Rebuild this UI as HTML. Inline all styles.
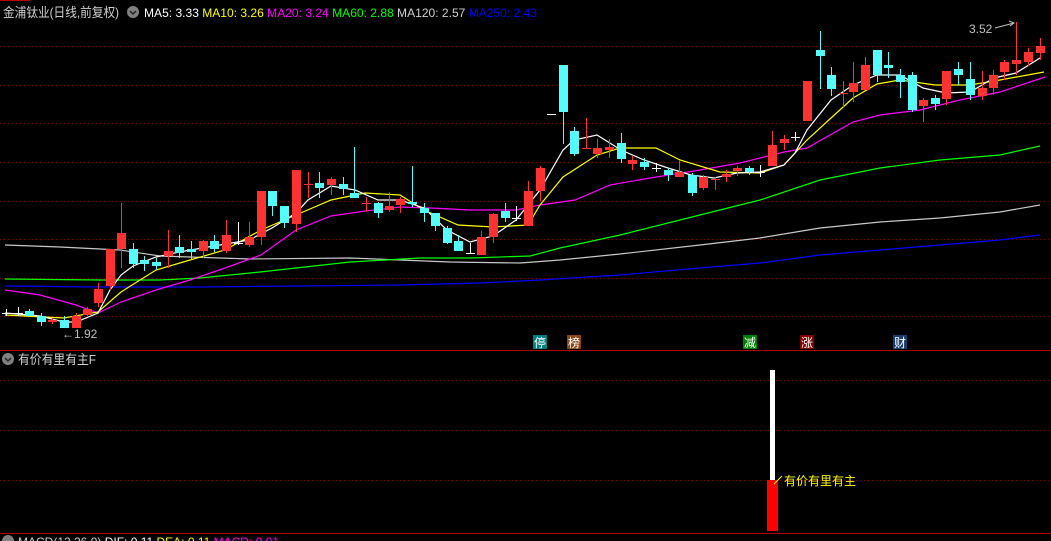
<!DOCTYPE html>
<html><head><meta charset="utf-8"><style>
html,body{margin:0;padding:0;background:#000;width:1051px;height:541px;overflow:hidden}
svg{display:block}
text{font-family:"Liberation Sans","Noto Sans CJK SC",sans-serif}
</style></head><body>
<svg width="1051" height="541" viewBox="0 0 1051 541" xmlns="http://www.w3.org/2000/svg">
<rect width="1051" height="541" fill="#000"/>
<line x1="0" y1="0.5" x2="30" y2="0.5" stroke="#b00" />
<g stroke="#7a0000" stroke-dasharray="1,3" stroke-width="1">
<line x1="0" y1="46.5" x2="1051" y2="46.5"/><line x1="0" y1="85.5" x2="1051" y2="85.5"/>
<line x1="0" y1="123.5" x2="1051" y2="123.5"/><line x1="0" y1="162.5" x2="1051" y2="162.5"/>
<line x1="0" y1="201.5" x2="1051" y2="201.5"/><line x1="0" y1="239.5" x2="1051" y2="239.5"/>
<line x1="0" y1="278.5" x2="1051" y2="278.5"/><line x1="0" y1="316.5" x2="1051" y2="316.5"/>
<line x1="0" y1="380.5" x2="1051" y2="380.5"/><line x1="0" y1="430.5" x2="1051" y2="430.5"/>
<line x1="0" y1="480.5" x2="1051" y2="480.5"/>
</g>
<line x1="0" y1="350.5" x2="1051" y2="350.5" stroke="#b00000"/>
<line x1="0" y1="533.5" x2="1051" y2="533.5" stroke="#b00000"/>
<g fill="none" stroke-width="1.2">
<polyline stroke="#c8c8c8" points="5,245 60,247 120,250 160,256 250,259 350,258 450,262 520,263 560,260 620,254 700,245 760,238 820,228 880,222 940,218 1000,212 1040,205"/>
<polyline stroke="#0000ff" points="5,286 100,287 200,287 300,286 400,285 480,283 540,280 620,275 700,268 760,263 820,255 880,250 940,245 1000,240 1040,235"/>
<polyline stroke="#00ff00" points="5,279 100,280 160,280 200,278 260,272 350,262 420,258 470,258 530,256 560,248 620,235 700,215 760,200 820,180 880,168 940,160 1000,155 1040,146"/>
<polyline stroke="#ff00ff" points="5,290 40,295 76,305 98,313 121,302 156,290 190,280 225,268 261,255 296,230 331,216 365,211 400,207 430,208 470,210 516,210 540,205 575,200 610,185 650,178 700,170 740,163 784,152 807,148 853,122 880,115 920,110 960,100 1000,92 1045,77"/>
<polyline stroke="#ffff00" points="5,315 64,318 98,312 121,292 156,270 190,260 225,250 261,230 296,215 331,200 365,193 400,195 424,210 458,225 493,227 528,225 540,205 563,177 597,155 620,148 656,148 680,160 720,172 760,173 784,165 807,140 831,118 853,98 877,84 900,80 935,85 970,85 1000,80 1044,72"/>
<polyline stroke="#ffffff" points="5,313 40,316 64,322 76,322 98,313 110,290 121,275 133,266 156,257 179,252 214,246 249,240 272,228 296,213 308,200 331,186 355,190 378,200 400,200 424,208 447,230 470,242 493,236 516,220 540,190 563,150 574,140 597,135 621,150 644,160 668,168 691,175 714,178 737,173 760,172 784,165 795,153 807,130 831,100 853,85 877,75 900,75 923,88 946,93 970,92 994,78 1016,73 1040,58"/>
</g>
<g id="candles"></g>
<text x="62" y="338" fill="#c0c0c0" font-size="12">←1.92</text>
<text x="969" y="33" fill="#c0c0c0" font-size="12">3.52</text>
<line x1="995" y1="28" x2="1014" y2="23" stroke="#c0c0c0"/><polyline points="1009,21 1014,23 1010,26" fill="none" stroke="#c0c0c0"/>
<g font-size="12" fill="#fff">
<rect x="533" y="335" width="14" height="14" fill="#008080"/><text x="534" y="347">停</text>
<rect x="567" y="335" width="14" height="14" fill="#8b4513"/><text x="568" y="347">榜</text>
<rect x="743" y="335" width="14" height="14" fill="#008000"/><text x="744" y="347">减</text>
<rect x="800" y="335" width="14" height="14" fill="#800000"/><text x="801" y="347">涨</text>
<rect x="893" y="335" width="14" height="14" fill="#1a3f6f"/><text x="894" y="347">财</text>
</g>
<circle cx="8" cy="359" r="6" fill="#808080"/><polyline points="5,358 8,361 11,358" fill="none" stroke="#222" stroke-width="1.5"/>
<text x="18" y="364" fill="#d0d0d0" font-size="13" textLength="78" lengthAdjust="spacingAndGlyphs">有价有里有主F</text>
<rect x="770" y="370" width="5" height="110" fill="#fff"/>
<rect x="767" y="480" width="11" height="51" fill="#ff0000"/>
<line x1="774" y1="484" x2="782" y2="476" stroke="#ffff00"/>
<text x="784" y="485" fill="#ffff00" font-size="12">有价有里有主</text>
<text x="3" y="17" font-size="13" fill="#d0d0d0" textLength="116" lengthAdjust="spacingAndGlyphs">金浦钛业(日线,前复权)</text>
<circle cx="133" cy="12" r="6" fill="#808080"/><polyline points="130,11 133,14 136,11" fill="none" stroke="#222" stroke-width="1.5"/>
<text x="144" y="17" font-size="12" textLength="393" lengthAdjust="spacingAndGlyphs"><tspan fill="#fff">MA5: 3.33 </tspan><tspan fill="#ffff00">MA10: 3.26 </tspan><tspan fill="#ff00ff">MA20: 3.24 </tspan><tspan fill="#00ff00">MA60: 2.88 </tspan><tspan fill="#d0d0d0">MA120: 2.57 </tspan><tspan fill="#0000ff">MA250: 2.43</tspan></text>
<circle cx="8" cy="541" r="6" fill="#808080"/>
<text x="18" y="546" font-size="12"><tspan fill="#d0d0d0">MACD(12,26,9) </tspan><tspan fill="#fff">DIF: 0.11 </tspan><tspan fill="#ffff00">DEA: 0.11 </tspan><tspan fill="#ff00ff">MACD: 0.01</tspan></text>
</svg>
<script>
var d=[
[6,'w',313,314,309,316],[18,'w',313,313,307,316],[29,'c',311,316,309,317],[41,'c',316,322,313,326],[52,'r',320,322,318,324],
[64,'c',320,328,316,328],[76,'r',316,328,313,328],[87,'r',309,315,307,316],[98,'r',289,303,283,307],[110,'r',249,286,249,290],
[121,'r',233,249,203,268],[133,'c',249,264,243,268],[144,'c',260,264,256,271],[156,'c',262,266,258,270],[168,'r',251,256,230,268],
[179,'c',247,253,235,258],[191,'c',249,252,241,260],[203,'r',241,251,240,258],[214,'c',241,249,235,252],[226,'r',235,251,220,253],
[238,'w',243,243,222,245],[249,'r',237,245,222,247],[261,'r',191,237,191,245],[272,'c',191,206,191,216],[284,'c',206,223,206,228],
[296,'r',170,224,170,232],[308,'r',184,185,172,198],[319,'c',183,188,172,198],[331,'r',179,185,177,195],[343,'c',184,189,177,195],
[354,'c',193,198,147,198],[366,'r',203,204,197,212],[378,'c',203,213,202,218],[389,'r',206,210,192,212],[400,'r',199,205,197,213],
[412,'c',202,204,166,207],[424,'c',208,213,203,222],[435,'c',213,226,213,231],[447,'c',228,243,226,244],[458,'c',241,251,235,251],
[470,'w',253,253,243,253],[481,'r',237,255,231,255],[493,'r',214,237,213,243],[505,'c',211,218,203,222],[516,'w',218,218,206,221],
[528,'r',191,226,181,226],[540,'r',168,191,166,201],[551,'w',114,114,114,114],[563,'c',65,112,65,144],[574,'c',131,154,127,156],
[586,'r',148,149,118,149],[597,'r',148,154,139,158],[609,'r',147,150,139,158],[621,'c',143,159,133,163],[632,'r',160,164,156,170],
[644,'c',162,167,158,170],[656,'w',168,168,163,172],[668,'c',170,175,168,181],[679,'r',172,177,160,177],[692,'c',175,193,173,196],
[703,'r',177,188,175,190],[715,'r',179,180,177,190],[726,'r',174,177,170,182],[737,'r',168,171,166,176],[749,'c',168,172,166,175],
[760,'w',172,172,165,177],[772,'r',145,166,131,166],[784,'r',139,143,135,150],[795,'w',137,137,132,141],[807,'r',81,121,81,121],
[820,'c',50,56,31,89],[831,'c',75,89,67,96],[843,'r',93,94,81,108],[853,'r',83,92,62,102],[865,'r',65,90,57,90],
[877,'c',50,75,50,82],[888,'c',65,68,52,78],[900,'c',75,82,69,98],[912,'c',75,110,72,112],[923,'r',100,106,98,122],
[935,'c',98,104,95,110],[946,'r',71,99,71,105],[958,'c',69,75,62,85],[970,'c',79,95,62,100],[982,'r',88,96,71,100],
[993,'r',75,88,70,95],[1004,'r',62,72,60,80],[1016,'r',60,64,22,75],[1028,'r',52,62,48,66],[1040,'r',46,53,38,60]];
var col={r:'#ff3232',c:'#54fcfc',w:'#ffffff'},s='';
d.forEach(function(a){var x=a[0],c=col[a[1]];
s+='<line x1="'+(x+0.5)+'" y1="'+a[4]+'" x2="'+(x+0.5)+'" y2="'+a[5]+'" stroke="'+c+'"/>';
var h=a[3]-a[2];if(h<2){s+='<line x1="'+(x-4)+'" y1="'+(a[2]+0.5)+'" x2="'+(x+5)+'" y2="'+(a[2]+0.5)+'" stroke="'+c+'"/>';}
else s+='<rect x="'+(x-4)+'" y="'+a[2]+'" width="9" height="'+h+'" fill="'+c+'"/>';});
document.getElementById('candles').innerHTML=s;
</script>
</body></html>
